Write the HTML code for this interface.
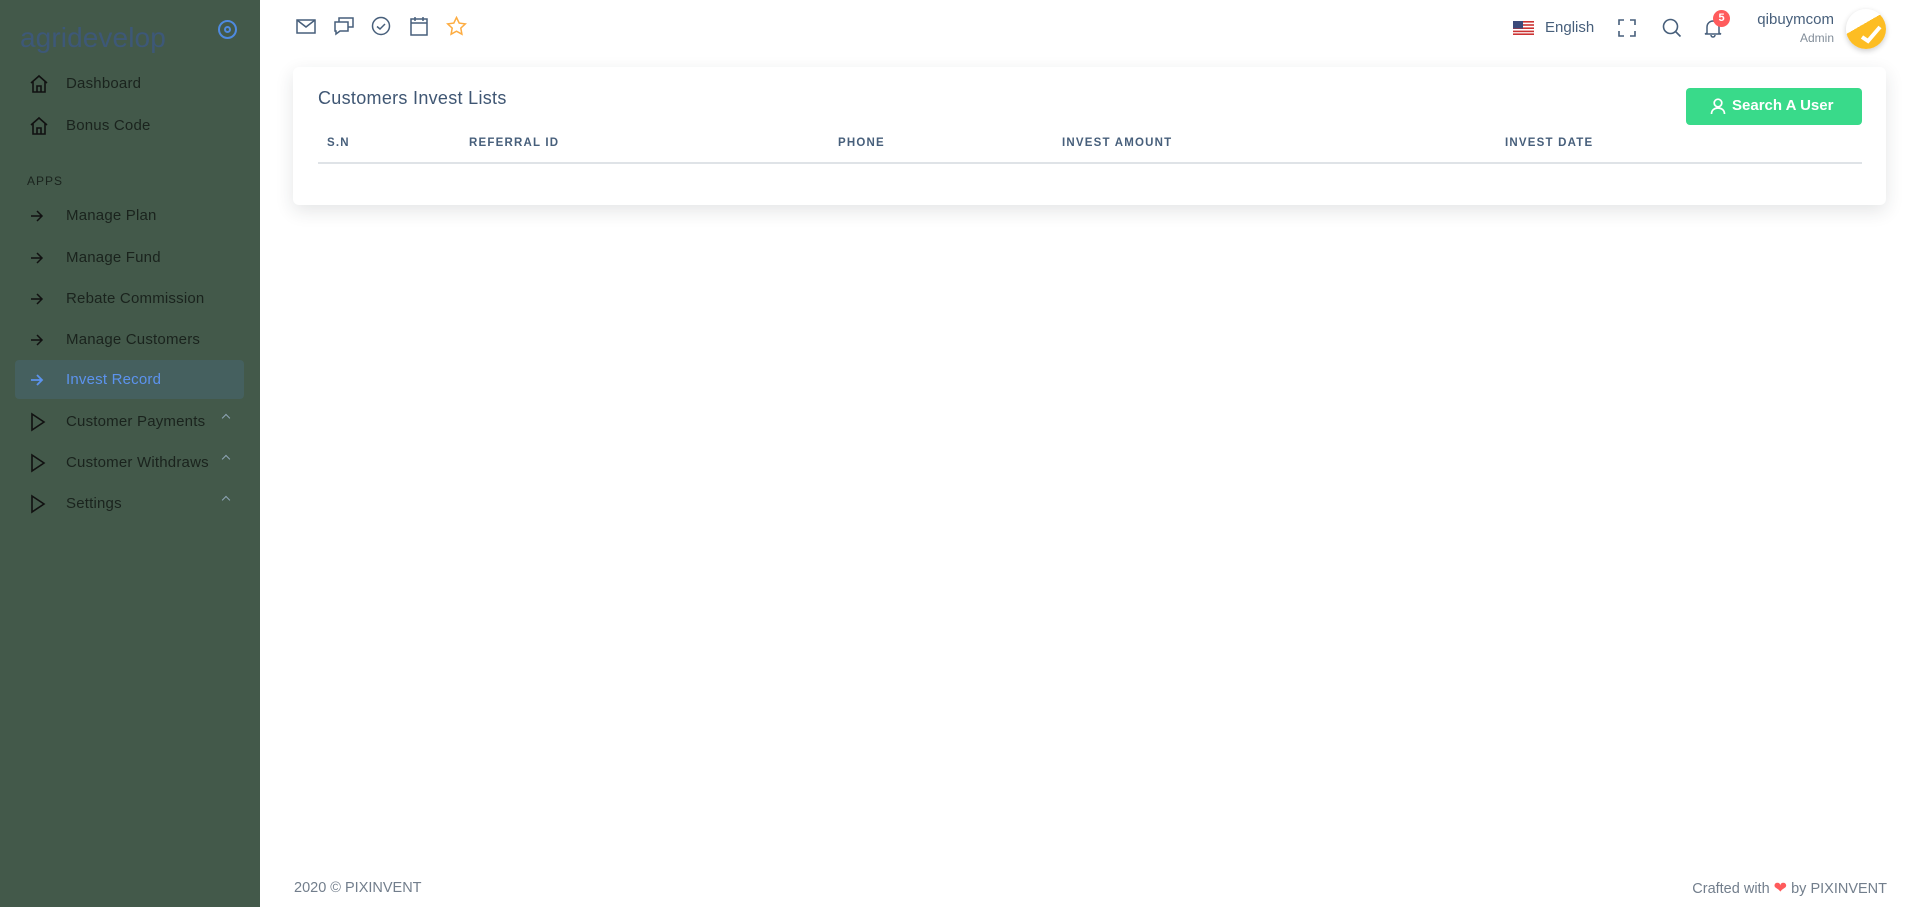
<!DOCTYPE html>
<html><head><meta charset="utf-8"><style>
*{box-sizing:border-box;margin:0;padding:0}
body{width:1920px;height:907px;overflow:hidden;background:#fff;font-family:"Liberation Sans",sans-serif;position:relative}
.side{position:absolute;left:0;top:0;width:260px;height:907px;background:#43594a}
.logo{position:absolute;left:20px;top:22px;font-size:28px;color:#3d5878;letter-spacing:0.1px}
.tgl{position:absolute;left:218px;top:20px;width:19px;height:19px;border:2.5px solid #4e8ae0;border-radius:50%}
.tgl:after{content:"";position:absolute;left:3.5px;top:3.5px;width:7px;height:7px;border:2.5px solid #4e8ae0;border-radius:50%;box-sizing:border-box}
.ni{position:absolute;left:15px;width:229px;height:39px;font-size:15px;color:#1a231d;letter-spacing:0.2px}
.ni span{position:absolute;left:51px;top:11px}
.ni svg{position:absolute;left:14px;top:10px}
.ni.act{background:#45605f;border-radius:4px;color:#5c93ee}
.car{position:absolute;left:208px;top:13px;width:6px;height:6px;border-left:1.5px solid #8fa5b6;border-top:1.5px solid #8fa5b6;transform:rotate(45deg)}
.apps{position:absolute;left:27px;top:174px;font-size:12px;color:#1a231d;letter-spacing:1px}
.ic{position:absolute;top:16px}
.card{position:absolute;left:293px;top:67px;width:1593px;height:138px;background:#fff;border-radius:6px;box-shadow:0 6px 18px rgba(34,41,47,.12)}
.title{position:absolute;left:25px;top:21px;font-size:18px;color:#3f5673;letter-spacing:.3px}
.btn{position:absolute;left:1393px;top:21px;width:176px;height:37px;background:#39da8a;border-radius:4px;color:#fff;font-size:15px;font-weight:bold}
.th{position:absolute;top:70px;font-size:11.5px;font-weight:bold;color:#475f7b;letter-spacing:1.2px}
.line{position:absolute;left:25px;top:95px;width:1544px;height:2px;background:#dfe3e7}
.foot{position:absolute;top:880px;font-size:14.5px;line-height:17px;height:17px;color:#727e8c}
</style></head><body>
<div class="side">
<div class="logo">agridevelop</div>
<div class="tgl"></div>
<div class="ni" style="top:64px"><svg width="20" height="20" viewBox="0 0 20 20" fill="none" stroke="#111" stroke-width="1.6"><path d="M2 9L10 2l8 7M4 7.5V18h12V7.5M8 18v-6h4v6"/></svg><span>Dashboard</span></div>
<div class="ni" style="top:106px"><svg width="20" height="20" viewBox="0 0 20 20" fill="none" stroke="#111" stroke-width="1.6"><path d="M2 9L10 2l8 7M4 7.5V18h12V7.5M8 18v-6h4v6"/></svg><span>Bonus Code</span></div>
<div class="apps">APPS</div>
<div class="ni" style="top:196px"><svg width="16" height="20" viewBox="0 0 16 20" fill="none" stroke="#111" stroke-width="1.5"><path d="M2 10h11M8 5l5 5-5 5"/></svg><span>Manage Plan</span></div>
<div class="ni" style="top:238px"><svg width="16" height="20" viewBox="0 0 16 20" fill="none" stroke="#111" stroke-width="1.5"><path d="M2 10h11M8 5l5 5-5 5"/></svg><span>Manage Fund</span></div>
<div class="ni" style="top:279px"><svg width="16" height="20" viewBox="0 0 16 20" fill="none" stroke="#111" stroke-width="1.5"><path d="M2 10h11M8 5l5 5-5 5"/></svg><span>Rebate Commission</span></div>
<div class="ni" style="top:320px"><svg width="16" height="20" viewBox="0 0 16 20" fill="none" stroke="#111" stroke-width="1.5"><path d="M2 10h11M8 5l5 5-5 5"/></svg><span>Manage Customers</span></div>
<div class="ni act" style="top:360px"><svg width="16" height="20" viewBox="0 0 16 20" fill="none" stroke="#5c93ee" stroke-width="1.8"><path d="M2 10h11M8 5l5 5-5 5"/></svg><span>Invest Record</span></div>
<div class="ni" style="top:402px"><svg width="18" height="20" viewBox="0 0 18 20" fill="none" stroke="#111" stroke-width="1.6"><path d="M3 2l12 8-12 8z"/></svg><span>Customer Payments</span><i class="car"></i></div>
<div class="ni" style="top:443px"><svg width="18" height="20" viewBox="0 0 18 20" fill="none" stroke="#111" stroke-width="1.6"><path d="M3 2l12 8-12 8z"/></svg><span>Customer Withdraws</span><i class="car"></i></div>
<div class="ni" style="top:484px"><svg width="18" height="20" viewBox="0 0 18 20" fill="none" stroke="#111" stroke-width="1.6"><path d="M3 2l12 8-12 8z"/></svg><span>Settings</span><i class="car"></i></div>
</div>

<svg class="ic" style="left:296px" width="20" height="20" viewBox="0 0 20 20" fill="none" stroke="#475f7b" stroke-width="1.5"><rect x="1" y="4" width="18" height="13"/><path d="M1 4l9 7 9-7"/></svg>
<svg class="ic" style="left:334px" width="20" height="20" viewBox="0 0 20 20" fill="none" stroke="#475f7b" stroke-width="1.5"><path d="M1 6h13v9H6l-4 3v-3H1z"/><path d="M5 6V2h14v9h-5"/></svg>
<svg class="ic" style="left:371px" width="20" height="20" viewBox="0 0 20 20" fill="none" stroke="#475f7b" stroke-width="1.5"><circle cx="10" cy="10" r="8.5"/><path d="M6 10.5l3 2.5 5-5"/></svg>
<svg class="ic" style="left:409px" width="20" height="20" viewBox="0 0 20 20" fill="none" stroke="#475f7b" stroke-width="1.5"><rect x="2" y="3" width="16" height="16"/><path d="M2 7h16M6 1v4M14 1v4"/></svg>
<svg class="ic" style="left:446px" width="21" height="20" viewBox="0 0 21 20" fill="none" stroke="#fdac41" stroke-width="1.5"><path d="M10.5 1.5l2.7 5.6 6.1.8-4.5 4.2 1.1 6.1-5.4-3-5.4 3 1.1-6.1L1.7 7.9l6.1-.8z"/></svg>

<svg style="position:absolute;left:1513px;top:21px" width="21" height="14" viewBox="0 0 21 14"><rect width="21" height="14" fill="#fff"/><g fill="#c33"><rect y="0" width="21" height="1.6"/><rect y="3.2" width="21" height="1.6"/><rect y="6.4" width="21" height="1.6"/><rect y="9.6" width="21" height="1.6"/><rect y="12.4" width="21" height="1.6"/></g><rect width="10" height="7.5" fill="#3b4a7a"/></svg>
<div style="position:absolute;left:1545px;top:19px;font-size:15px;color:#475f7b">English</div>
<svg style="position:absolute;left:1618px;top:19px" width="18" height="18" viewBox="0 0 18 18" fill="none" stroke="#475f7b" stroke-width="1.6"><path d="M1 6V1h5M12 1h5v5M17 12v5h-5M6 17H1v-5"/></svg>
<svg style="position:absolute;left:1662px;top:18px" width="20" height="20" viewBox="0 0 20 20" fill="none" stroke="#475f7b" stroke-width="1.6"><circle cx="8.5" cy="8.5" r="7"/><path d="M13.5 13.5l5 5"/></svg>
<svg style="position:absolute;left:1704px;top:18px" width="18" height="20" viewBox="0 0 18 20" fill="none" stroke="#475f7b" stroke-width="1.5"><path d="M3 15V9a6 6 0 0 1 12 0v6l2 1H1zM7 17a2 2 0 0 0 4 0"/></svg>
<div style="position:absolute;left:1713px;top:10px;width:17px;height:17px;border-radius:50%;background:#ff5b5c;color:#fff;font-size:11px;font-weight:bold;text-align:center;line-height:17px">5</div>
<div style="position:absolute;right:86px;top:11px;font-size:15px;color:#475f7b">qibuymcom</div>
<div style="position:absolute;right:86px;top:31px;font-size:12px;color:#828d99">Admin</div>
<div style="position:absolute;left:1846px;top:9px;width:40px;height:40px;border-radius:50%;background:linear-gradient(150deg,#fff 0 40%,#fdbd23 40%);box-shadow:0 2px 6px rgba(0,0,0,.2);overflow:hidden"><svg width="40" height="40" viewBox="0 0 40 40"><path d="M16 28l6 4 12-14" stroke="#fff" stroke-width="4" fill="none"/></svg></div>

<div class="card">
<div class="title">Customers Invest Lists</div>
<div class="btn"><svg style="position:absolute;left:24px;top:10px" width="16" height="17" viewBox="0 0 16 17" fill="none" stroke="#fff" stroke-width="1.7"><circle cx="8" cy="5" r="3.8"/><path d="M1.5 16c0-4 3-6 6.5-6s6.5 2 6.5 6"/></svg><span style="position:absolute;left:46px;top:9px">Search A User</span></div>
<div class="th" style="left:34px">S.N</div>
<div class="th" style="left:176px">REFERRAL ID</div>
<div class="th" style="left:545px">PHONE</div>
<div class="th" style="left:769px">INVEST AMOUNT</div>
<div class="th" style="left:1212px">INVEST DATE</div>
<div class="line"></div>
</div>

<div class="foot" style="left:294px">2020 © PIXINVENT</div>
<div class="foot" style="right:33px">Crafted with <span style="color:#ff5b5c;font-size:16px;line-height:17px">&#10084;</span> by PIXINVENT</div>
</body></html>
